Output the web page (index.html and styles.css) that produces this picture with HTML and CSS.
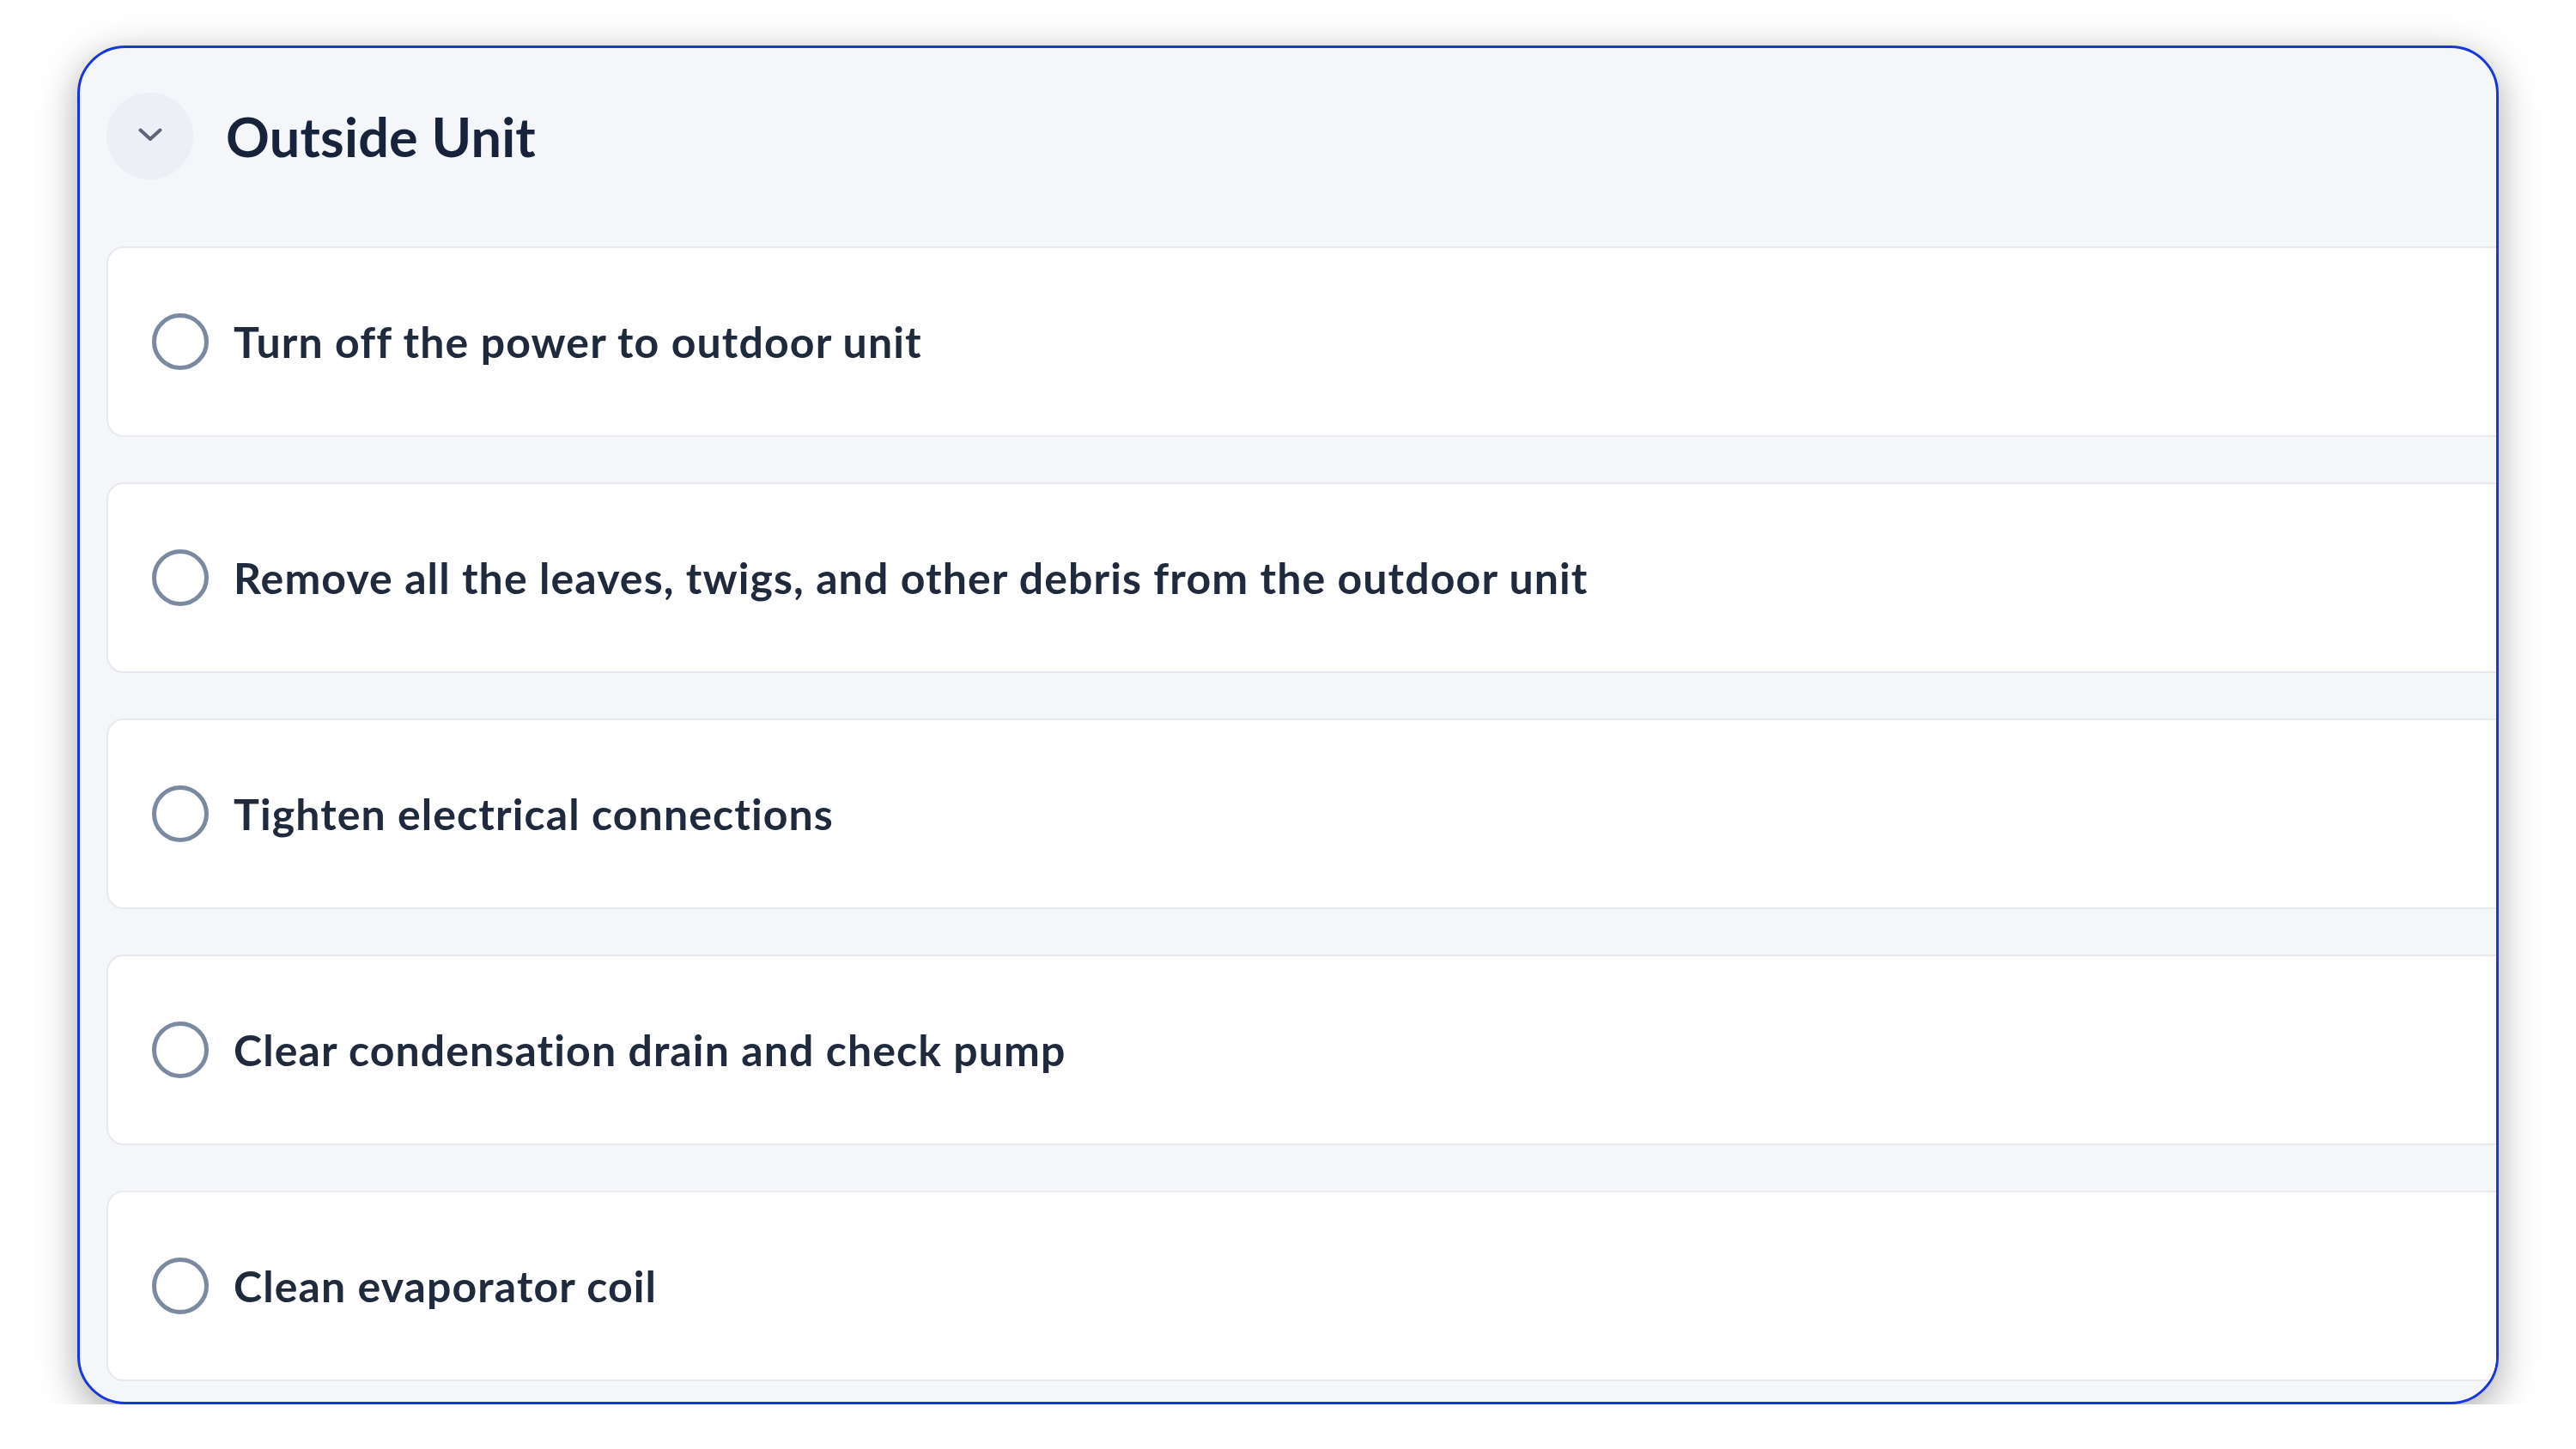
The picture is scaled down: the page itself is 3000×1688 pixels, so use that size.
FILE: index.html
```html
<!DOCTYPE html>
<html lang="en">
<head>
<meta charset="utf-8">
<title>Outside Unit</title>
<link rel="stylesheet" href="styles.css">
</head>
<body>
<section class="panel">
  <header class="panel-head">
    <button class="toggle" type="button" aria-label="Collapse">
      <svg viewBox="0 0 28 16" width="28" height="16" aria-hidden="true">
        <path d="M2.5 2.5 L14 13 L25.5 2.5" fill="none" stroke="currentColor" stroke-width="4" stroke-linecap="round" stroke-linejoin="round"/>
      </svg>
    </button>
    <h2 class="panel-title">Outside Unit</h2>
  </header>
  <ul class="tasks">
    <li class="task"><span class="radio"></span><span class="task-label">Turn off the power to outdoor unit</span></li>
    <li class="task"><span class="radio"></span><span class="task-label">Remove all the leaves, twigs, and other debris from the outdoor unit</span></li>
    <li class="task"><span class="radio"></span><span class="task-label">Tighten electrical connections</span></li>
    <li class="task"><span class="radio"></span><span class="task-label">Clear condensation drain and check pump</span></li>
    <li class="task"><span class="radio"></span><span class="task-label">Clean evaporator coil</span></li>
  </ul>
</section>
</body>
</html>
```

FILE: styles.css
```css
html, body {
  margin: 0;
  padding: 0;
  background: #ffffff;
}

body {
  padding: 53px 90px 0 90px;
  font-family: "Lato", "Noto Sans", sans-serif;
  font-variant-ligatures: none;
  color: #17233a;
}

.panel {
  box-sizing: border-box;
  height: 1583px;
  border: 3px solid #1636de;
  border-radius: 56px;
  background: #f4f6fa;
  overflow: hidden;
  padding: 52px 0 0 31px;
  box-shadow: 0 12px 45px rgba(0, 0, 0, 0.34);
}

.panel-head {
  display: flex;
  align-items: center;
  gap: 38px;
  height: 100px;
  margin-bottom: 79px;
}

.toggle {
  width: 101px;
  height: 101px;
  border: none;
  border-radius: 50%;
  background: #eceff5;
  color: #5b6577;
  display: flex;
  align-items: center;
  justify-content: center;
  padding: 0;
}

.toggle svg {
  display: block;
  margin-top: -2px;
}

.panel-title {
  margin: 0;
  font-size: 63px;
  font-weight: 700;
  color: #17233a;
  letter-spacing: 0.2px;
}

.tasks {
  list-style: none;
  margin: 0 -60px 0 0;
  padding: 0;
  display: flex;
  flex-direction: column;
  gap: 53px;
}

.task {
  box-sizing: border-box;
  height: 222px;
  background: #ffffff;
  border: 2px solid #e7e9ee;
  border-radius: 20px;
  padding-left: 51px;
  display: flex;
  align-items: center;
  gap: 29px;
}

.radio {
  box-sizing: border-box;
  flex: none;
  width: 66px;
  height: 66px;
  border: 5px solid #7b8aa0;
  border-radius: 50%;
}

.task-label {
  font-size: 50px;
  font-weight: 700;
  letter-spacing: 1.1px;
  color: #1f2a3d;
}
```
